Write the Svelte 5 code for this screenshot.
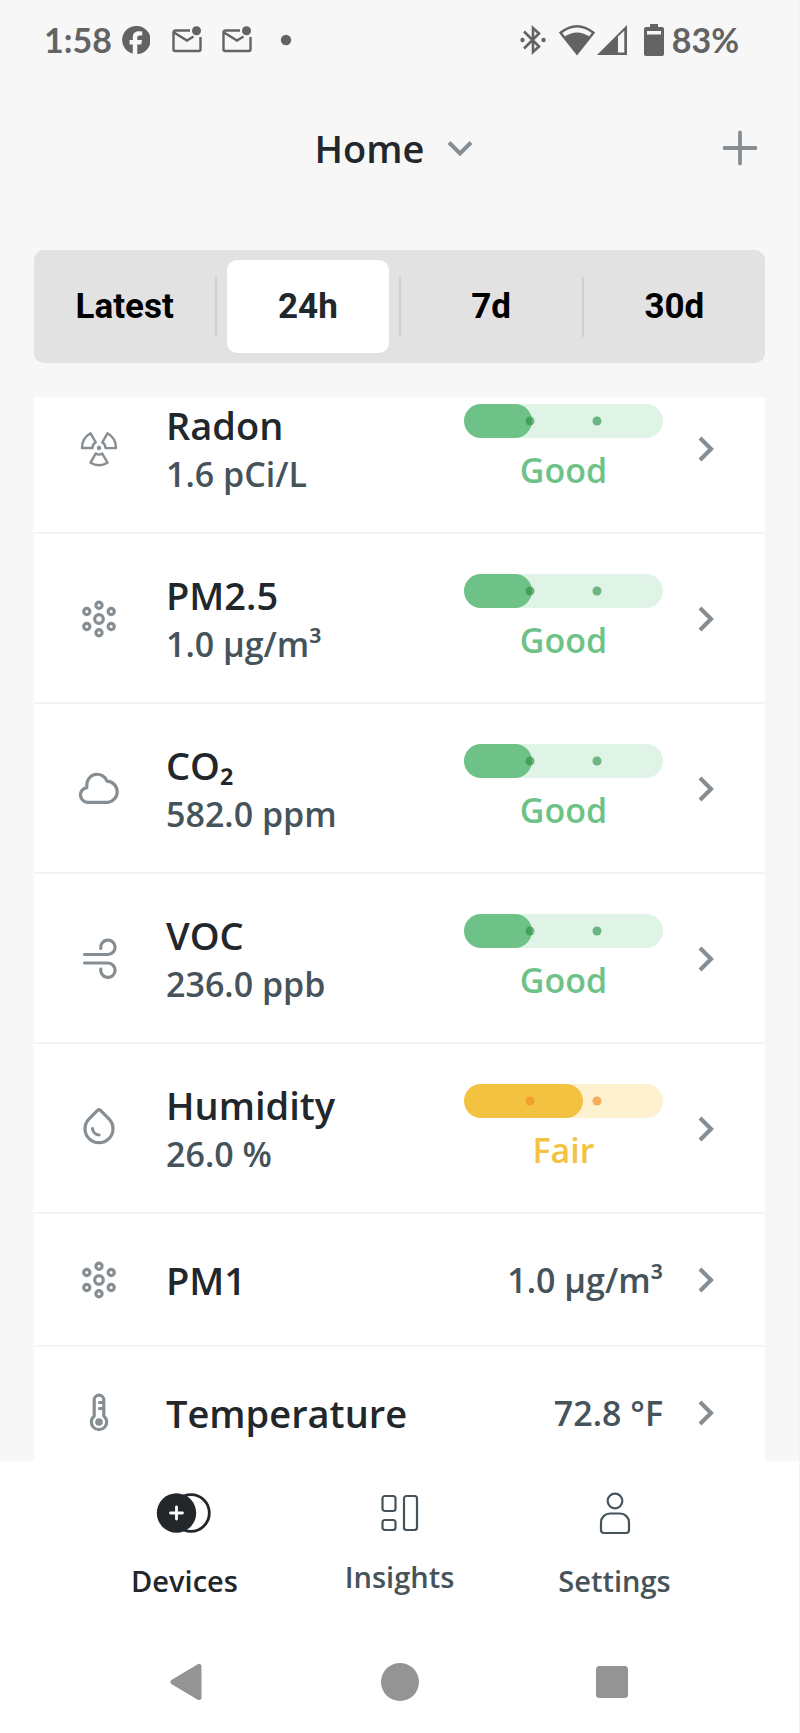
<script lang="ts">
  type Level = 'good' | 'fair'

  interface Sensor {
    name: string
    icon: string
    value: string
    level?: Level
    fill?: number
  }

  const ranges = ['Latest', '24h', '7d', '30d']
  let activeRange = $state('24h')

  const sensors: Sensor[] = [
    { name: 'Radon', icon: 'radon', value: '1.6 pCi/L', level: 'good', fill: 34 },
    { name: 'PM2.5', icon: 'particles', value: '1.0 µg/m³', level: 'good', fill: 34 },
    { name: 'CO₂', icon: 'cloud', value: '582.0 ppm', level: 'good', fill: 34 },
    { name: 'VOC', icon: 'wind', value: '236.0 ppb', level: 'good', fill: 34 },
    { name: 'Humidity', icon: 'drop', value: '26.0 %', level: 'fair', fill: 60 },
    { name: 'PM1', icon: 'particles', value: '1.0 µg/m³' },
    { name: 'Temperature', icon: 'thermometer', value: '72.8 °F' },
  ]

  const levelLabel: Record<Level, string> = { good: 'Good', fair: 'Fair' }
</script>

{#snippet mailIcon()}
  <svg class="status__mail" width="30" height="28" viewBox="0 0 30 28" aria-hidden="true">
    <path d="M18 4.5H3.2A1.7 1.7 0 0 0 1.5 6.2v17.1A1.7 1.7 0 0 0 3.2 25h23.6a1.7 1.7 0 0 0 1.7-1.7V11" fill="none" stroke="currentColor" stroke-width="2.4" />
    <path d="M2 6.5l13 8 6.5-4" fill="none" stroke="currentColor" stroke-width="2.4" />
    <circle cx="24.5" cy="4.8" r="4.5" fill="currentColor" />
  </svg>
{/snippet}

{#snippet sensorIcon(icon: string)}
  <svg class="row__icon" width="48" height="48" viewBox="0 0 48 48" aria-hidden="true">
    {#if icon === 'radon'}
      <g transform="translate(24 23)">
        {#each [0, 120, 240] as angle}
          <path transform="rotate({angle})" d="M-17 0A17 17 0 0 1-8.5-14.7L-3.2-5.7A6.5 6.5 0 0 0-6.5 0z" />
        {/each}
        <circle r="2.2" fill="currentColor" stroke="none" />
      </g>
    {:else if icon === 'particles'}
      <circle cx="24" cy="24" r="4.3" />
      <circle cx="24" cy="10.2" r="3.1" />
      <circle cx="24" cy="37.8" r="3.1" />
      <circle cx="11.8" cy="16.5" r="3.1" />
      <circle cx="36.2" cy="16.5" r="3.1" />
      <circle cx="11.8" cy="31.5" r="3.1" />
      <circle cx="36.2" cy="31.5" r="3.1" />
    {:else if icon === 'cloud'}
      <path d="M12.2 37.3A7.4 7.4 0 0 1 11.8 22.6V20A10.4 10.4 0 0 1 32 16.2A10.6 10.6 0 0 1 33 37.3Z" />
    {:else if icon === 'wind'}
      <path d="M9.5 19.5H33a7.2 7.2 0 1 0-7.2-6M9.5 28H33a7.2 7.2 0 1 1-7.2 6" />
    {:else if icon === 'drop'}
      <path d="M22.5 5.4L14.1 13.8A14 14 0 1 0 33.9 13.8L25.5 5.4a2.2 2.2 0 0 0-3 0z" />
      <path d="M17.5 23.5a7 7 0 0 0 6.5 6.5" />
    {:else if icon === 'thermometer'}
      <path d="M19.2 27V11a4.8 4.8 0 0 1 9.6 0v16a7.7 7.7 0 1 1-9.6 0z" />
      <circle cx="24" cy="33" r="3.8" fill="currentColor" stroke="none" />
      <path d="M24.5 13.5h3.5M24.5 19.5h3.5" />
    {/if}
  </svg>
{/snippet}

<div class="app">
  <!-- Status bar -->
  <div class="status">
    <div class="status__group">
      <span>1:58</span>
      <svg class="status__fb" width="28" height="28" viewBox="0 0 28 28" aria-hidden="true">
        <path fill="currentColor" d="M14 0a14 14 0 0 0-3.2 27.6V18.5H7.5V14h3.3v-2.5c0-4.2 2.2-6.3 6-6.3 1.5 0 2.7.2 3.4.4v4h-2.4c-2 0-2.5.8-2.5 2.2V14h4.7l-.8 4.5h-3.9V28A14 14 0 0 0 14 0z" />
      </svg>
      {@render mailIcon()}
      {@render mailIcon()}
      <svg class="status__more" width="12" height="12" viewBox="0 0 12 12" aria-hidden="true"><circle cx="6" cy="6" r="5.2" fill="currentColor" /></svg>
    </div>
    <div class="status__group">
      <svg width="26" height="30" viewBox="0 0 26 30" aria-hidden="true">
        <path d="M4 6.5L19 21.5L13 27V3L19 8.5L4 23.5" fill="none" stroke="currentColor" stroke-width="2.6" />
        <circle cx="2.5" cy="15" r="2.2" fill="currentColor" />
        <circle cx="23.5" cy="15" r="2.2" fill="currentColor" />
      </svg>
      <svg class="status__wifi" width="38" height="32" viewBox="0 0 38 32" aria-hidden="true">
        <path d="M19 29.5L2.5 8.8Q19-4.5 35.5 8.8Z" fill="none" stroke="currentColor" stroke-width="2.4" />
        <path d="M19 30.5L5.6 13.6Q19 3.5 32.4 13.6Z" fill="currentColor" />
      </svg>
      <svg width="32" height="32" viewBox="0 0 32 32" aria-hidden="true">
        <path fill="currentColor" fill-rule="evenodd" d="M31 1V31H1ZM22 12.5V28.5H28.3V6.7Z" />
      </svg>
      <svg class="status__battery" width="20" height="32" viewBox="0 0 20 32" aria-hidden="true">
        <path fill="currentColor" fill-rule="evenodd" d="M6 0h8v3h4a2 2 0 0 1 2 2v25a2 2 0 0 1-2 2H2a2 2 0 0 1-2-2V5a2 2 0 0 1 2-2h4zM3 7v3.5h14V7z" />
      </svg>
      <span>83%</span>
    </div>
  </div>

  <!-- Header -->
  <header class="header">
    <button class="header__home" type="button">
      Home
      <svg width="44" height="40" viewBox="0 0 44 40" aria-hidden="true">
        <path d="M9 14.5L20 25.5L31 14.5" fill="none" stroke="currentColor" stroke-width="4" />
      </svg>
    </button>
    <button class="header__add" type="button" aria-label="Add device">
      <svg width="36" height="36" viewBox="0 0 36 36" aria-hidden="true">
        <path d="M18 2.5v31M2.5 18h31" stroke="currentColor" stroke-width="3.8" stroke-linecap="round" />
      </svg>
    </button>
  </header>

  <!-- Time range -->
  <div class="ranges" role="group" aria-label="Time range">
    {#each ranges as range, i}
      {#if i > 0}<span class="ranges__divider"></span>{/if}
      <button
        class="ranges__item"
        class:ranges__item--active={range === activeRange}
        type="button"
        aria-pressed={range === activeRange}
        onclick={() => (activeRange = range)}
      >{range}</button>
    {/each}
  </div>

  <!-- Sensors -->
  <main class="sensors">
    <ul class="sensors__list">
      {#each sensors as sensor}
        <li>
          <a class="row" class:row--compact={!sensor.level} href="#{sensor.name}">
            {@render sensorIcon(sensor.icon)}
            <span class="row__text">
              <span class="row__name">{sensor.name}</span>
              {#if sensor.level}<span class="row__value">{sensor.value}</span>{/if}
            </span>
            {#if sensor.level}
              <span class="rating rating--{sensor.level}">
                <span class="rating__bar">
                  <span class="rating__fill" style="width: {sensor.fill}%"></span>
                  <span class="rating__dot rating__dot--first"></span>
                  <span class="rating__dot rating__dot--second"></span>
                </span>
                <span class="rating__label">{levelLabel[sensor.level]}</span>
              </span>
            {:else}
              <span class="row__value">{sensor.value}</span>
            {/if}
            <svg class="row__chevron" width="20" height="28" viewBox="0 0 20 28" aria-hidden="true">
              <path d="M4 3L15 14L4 25" fill="none" stroke="currentColor" stroke-width="4.2" />
            </svg>
          </a>
        </li>
      {/each}
    </ul>
  </main>

  <!-- Tabs -->
  <nav class="tabs">
    <a class="tabs__item tabs__item--active" href="#devices" aria-current="page">
      <svg width="60" height="44" viewBox="0 0 60 44" aria-hidden="true">
        <circle cx="36" cy="22" r="18.3" fill="none" stroke="currentColor" stroke-width="2.8" />
        <circle cx="21.5" cy="22" r="19.7" fill="currentColor" />
        <path d="M21.5 16v12M15.5 22h12" stroke="#fff" stroke-width="2.8" stroke-linecap="round" />
      </svg>
      Devices
    </a>
    <a class="tabs__item" href="#insights">
      <svg width="44" height="40" viewBox="0 0 44 40" fill="none" stroke="currentColor" stroke-width="2.2" aria-hidden="true">
        <rect x="4.5" y="5" width="13" height="15" rx="2.5" />
        <rect x="4.5" y="29" width="13" height="10" rx="2.5" />
        <rect x="26" y="5" width="13" height="34" rx="2.5" />
      </svg>
      Insights
    </a>
    <a class="tabs__item" href="#settings">
      <svg width="44" height="44" viewBox="0 0 44 44" fill="none" stroke="currentColor" stroke-width="2.2" aria-hidden="true">
        <circle cx="22" cy="10" r="7.3" />
        <path d="M17 22.5h10a9 9 0 0 1 9 9V39a3 3 0 0 1-3 3H11a3 3 0 0 1-3-3v-7.5a9 9 0 0 1 9-9z" />
      </svg>
      Settings
    </a>
  </nav>

  <!-- System navigation -->
  <div class="system">
    <button type="button" aria-label="Back">
      <svg width="40" height="40" viewBox="0 0 40 40" aria-hidden="true">
        <path d="M6 20L32 4.5V35.5Z" fill="currentColor" stroke="currentColor" stroke-width="5" stroke-linejoin="round" />
      </svg>
    </button>
    <button type="button" aria-label="Home screen">
      <svg width="40" height="40" viewBox="0 0 40 40" aria-hidden="true"><circle cx="20" cy="20" r="19" fill="currentColor" /></svg>
    </button>
    <button type="button" aria-label="Recent apps">
      <svg width="40" height="40" viewBox="0 0 40 40" aria-hidden="true"><rect x="3" y="4" width="32" height="32" rx="3.5" fill="currentColor" /></svg>
    </button>
  </div>
</div>

<style>
  :global(body) {
    margin: 0;
    background: #f7f7f7;
  }

  .app {
    box-sizing: border-box;
    display: flex;
    flex-direction: column;
    height: 100vh;
    border-right: 1px solid #f3f4e4;
    background: #f7f7f7;
    color: #22272b;
    font-family: 'Open Sans', 'Noto Sans', sans-serif;
    font-weight: 600;
  }

  button {
    padding: 0;
    border: 0;
    background: none;
    color: inherit;
    font: inherit;
    cursor: pointer;
  }

  a {
    color: inherit;
    text-decoration: none;
  }

  svg {
    display: block;
    flex-shrink: 0;
  }

  /* Status bar */
  .status {
    display: flex;
    align-items: center;
    justify-content: space-between;
    height: 80px;
    padding: 0 60px 0 44px;
    color: #636363;
    font: 700 34px/1 Lato, sans-serif;
  }

  .status__group {
    display: flex;
    align-items: center;
  }

  .status__fb {
    margin: 0 2px 0 10px;
  }

  .status__mail {
    margin-left: 20px;
  }

  .status__more {
    margin-left: 28px;
  }

  .status__wifi {
    margin-left: 12px;
  }

  .status__battery {
    margin: 0 8px 0 16px;
  }

  /* Header */
  .header {
    display: grid;
    grid-template-columns: 1fr auto 1fr;
    align-items: center;
    height: 136px;
    padding: 0 41px;
  }

  .header__home {
    grid-column: 2;
    display: flex;
    align-items: center;
    gap: 16px;
    font-size: 38px;
    line-height: 52px;
  }

  .header__home svg,
  .header__add {
    color: #868e93;
  }

  .header__add {
    justify-self: end;
  }

  /* Time range */
  .ranges {
    display: flex;
    align-items: center;
    margin: 34px 34px 0;
    border-radius: 10px;
    background: #e2e2e2;
  }

  .ranges__item {
    flex: 1;
    margin: 10px;
    border-radius: 10px;
    color: #000;
    font: 700 35px/93px Roboto, sans-serif;
  }

  .ranges__item--active {
    background: #fff;
    color: #22272b;
  }

  .ranges__divider {
    width: 2px;
    height: 60px;
    background: #d0d0d0;
  }

  /* Sensors */
  .sensors {
    flex: 1;
    min-height: 0;
    margin: 34px 34px 0;
    overflow: hidden;
  }

  .sensors__list {
    margin: -33px 0 0;
    padding: 0;
    background: #fff;
    list-style: none;
  }

  .row {
    box-sizing: border-box;
    display: flex;
    align-items: center;
    min-height: 170px;
    padding: 2px 49px 0 41px;
    border-bottom: 2px solid #f4f4f4;
  }

  .row--compact {
    min-height: 133px;
    padding-top: 0;
  }

  .row__icon {
    margin-right: 43px;
    fill: none;
    stroke: currentColor;
    stroke-width: 3.2px;
    stroke-linecap: round;
    stroke-linejoin: round;
    color: #868e93;
  }

  .row__icon g {
    stroke-width: 2.4px;
  }

  .row__text {
    display: flex;
    flex: 1;
    flex-direction: column;
  }

  .row__name {
    font-size: 38px;
    line-height: 50px;
  }

  .row__value {
    color: #46535a;
    font-size: 34px;
    line-height: 48px;
  }

  .row__chevron {
    margin-left: 33px;
    color: #868e93;
  }

  .rating {
    display: flex;
    flex-direction: column;
    gap: 8px;
    width: 199px;
    text-align: center;
  }

  .rating--good {
    --level: #6fc287;
    --track: #dff3e6;
    --dot: rgba(34, 140, 60, 0.6);
  }

  .rating--fair {
    --level: #f3c240;
    --track: #fdf1cf;
    --dot: rgba(240, 145, 35, 0.7);
  }

  .rating__bar {
    position: relative;
    height: 34px;
    border-radius: 17px;
    background: var(--track);
  }

  .rating__fill {
    display: block;
    height: 100%;
    border-radius: 17px;
    background: var(--level);
  }

  .rating__dot {
    position: absolute;
    top: 50%;
    width: 9px;
    height: 9px;
    border-radius: 50%;
    background: var(--dot);
    transform: translate(-50%, -50%);
  }

  .rating__dot--first {
    left: 33%;
  }

  .rating__dot--second {
    left: 67%;
  }

  .rating__label {
    color: var(--level);
    font-size: 34px;
    line-height: 48px;
  }

  /* Tabs */
  .tabs {
    display: flex;
    align-items: flex-start;
    padding: 30px 77px;
    background: #fff;
  }

  .tabs__item {
    display: flex;
    flex: 1;
    flex-direction: column;
    align-items: center;
    gap: 26px;
    color: #46535a;
    font-size: 29px;
    line-height: 40px;
  }

  .tabs__item--active {
    color: #22272b;
  }

  /* System navigation */
  .system {
    display: flex;
    height: 102px;
    padding: 0 80px;
    background: #fff;
    color: #949494;
  }

  .system button {
    display: flex;
    flex: 1;
    align-items: center;
    justify-content: center;
  }
</style>
